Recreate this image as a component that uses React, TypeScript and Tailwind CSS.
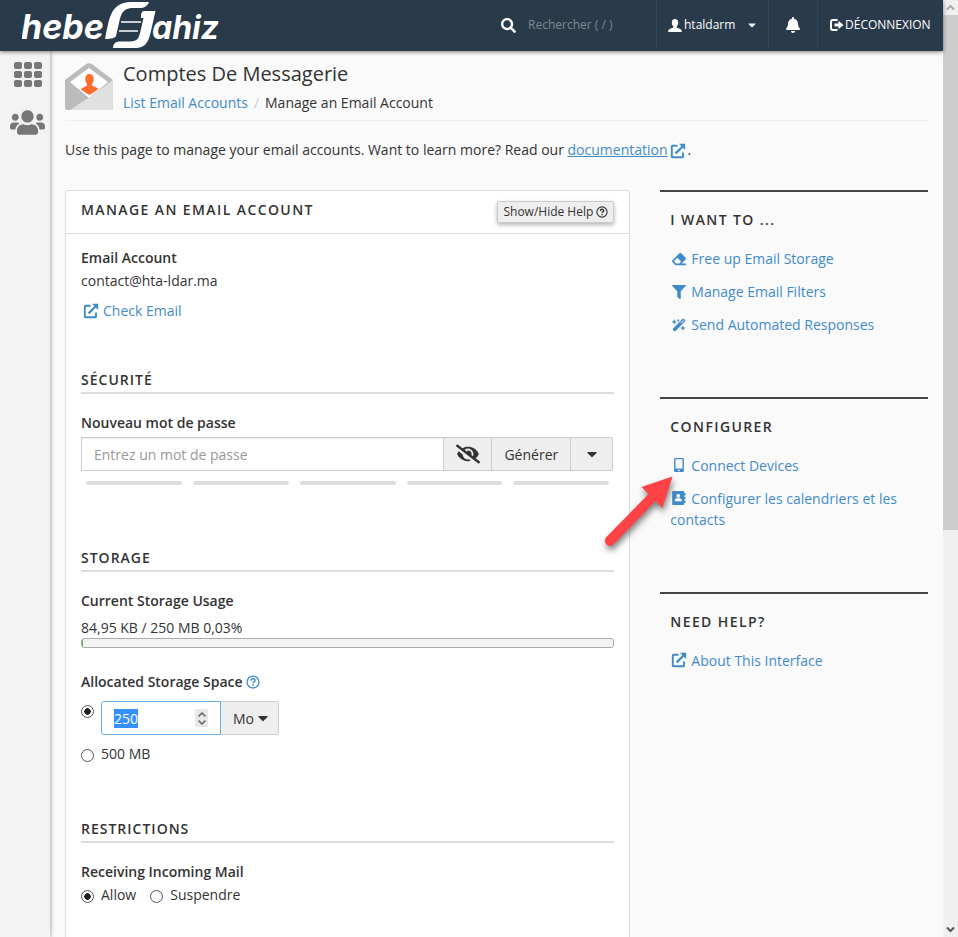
import { useEffect, useRef, type ReactNode } from "react";
import { FaBell, FaCaretDown, FaEraser, FaEyeSlash, FaFilter, FaSearch, FaUsers } from "react-icons/fa";
import { FaWandMagicSparkles } from "react-icons/fa6";

function ExternalIcon({ className = "" }: { className?: string }) {
  return (
    <svg viewBox="0 0 16 16" className={`inline-block h-4 w-4 shrink-0 ${className}`} fill="none" stroke="currentColor" strokeWidth="1.9" aria-hidden="true">
      <path d="M7.5 2.8H2.5a.7.7 0 0 0-.7.7v10a.7.7 0 0 0 .7.7h9.800a.7.7 0 0 0 .7-.7V9.500" />
      <path d="M5.600 10.400 12.800 3.200" strokeWidth="2.200" />
      <path d="M9 .8h6.200v6.200z" fill="currentColor" stroke="none" />
    </svg>
  );
}

function HelpIcon({ className = "" }: { className?: string }) {
  return (
    <svg viewBox="0 0 16 16" className={`inline-block shrink-0 ${className}`} fill="none" stroke="currentColor" strokeWidth="1.5" aria-hidden="true">
      <circle cx="8" cy="8" r="6.8" />
      <path d="M5.9 6.5c0-3 4.3-2.8 4.3-.3 0 1.6-2.1 1.6-2.1 3.1" strokeWidth="1.8" />
      <path d="M7.2 10.6h1.8v1.7H7.2z" fill="currentColor" stroke="none" />
    </svg>
  );
}

function PhoneIcon() {
  return (
    <svg viewBox="0 0 16 16" className="inline-block h-4 w-4" aria-hidden="true">
      <path fill="currentColor" fillRule="evenodd" d="M4.5 1h7c.8 0 1.4.6 1.4 1.3v11.4c0 .7-.6 1.3-1.4 1.3h-7c-.8 0-1.4-.6-1.4-1.3V2.300C3.100 1.600 3.700 1 4.500 1zm0 1.300v9.200h7V2.300zM8 12.400a.9.9 0 1 0 0 1.800.9.9 0 0 0 0-1.800z" />
    </svg>
  );
}

function ContactIcon() {
  return (
    <svg viewBox="0 0 16 16" className="inline-block h-4 w-4" aria-hidden="true">
      <path fill="currentColor" d="M2.200 1h10c.6 0 1 .4 1 1v12c0 .6-.4 1-1 1h-10c-.6 0-1-.4-1-1V2c0-.6.4-1 1-1zM13.200 3h1.300v2.500h-1.300zM13.200 6.800h1.300v2.500h-1.300zM13.200 10.500h1.300V13h-1.300z" />
      <circle cx="7.300" cy="5.900" r="1.900" fill="#fafafa" />
      <path d="M3.800 11.300c0-3 1.800-3 3.500-3s3.500 0 3.500 3z" fill="#fafafa" />
    </svg>
  );
}

function UserIcon() {
  return (
    <svg viewBox="0 0 14 13" className="h-[13px] w-[14px]" fill="currentColor" aria-hidden="true">
      <path d="M7 0c2 0 3.200 1.300 3.200 3.500 0 1.700-.6 3-1.500 3.800v1.100l4.100 1.900c.7.400 1 1.400 1 2.700H.2c0-1.300.3-2.300 1-2.700l4.100-1.900V7.300C4.400 6.500 3.800 5.200 3.800 3.500 3.800 1.300 5 0 7 0z" />
    </svg>
  );
}

function LogoutIcon() {
  return (
    <svg viewBox="0 0 14 12" className="h-3 w-[14px]" aria-hidden="true">
      <path d="M7.500 1H3Q1 1 1 3v6q0 2 2 2h4.500" fill="none" stroke="currentColor" strokeWidth="2" />
      <path d="M4.500 4.500H8.500V1.800L13.500 6 8.500 10.200V7.500H4.500z" fill="currentColor" />
    </svg>
  );
}

function Logo() {
  return (
    <svg viewBox="0 0 200 50" className="h-[50px] w-[200px]" role="img" aria-label="hebeR Jahiz">
      <g fill="#fff" fontFamily="Inter, 'Open Sans', sans-serif" fontStyle="italic" fontWeight="700">
        <text x="-1" y="39" fontSize="34">hebe</text>
        <text x="130" y="39" fontSize="32">ahiz</text>
      </g>
      <path fill="#fff" d="M83 39C87 22 87 2 109 2H127C125.500 6 122 8 118 8H112C99 8 99 16 97 23L94 36C93 38 90 39 83 39z" />
      <path fill="#fff" d="M121.500 11H133.500L128.500 33C125.500 46 120.500 48 111.500 48H91Q91 42 97 41.500H108C115.500 41.500 117 38 118.500 31L121.500 18H119Q118.500 12 121.500 11z" />
      <path d="M99 22H119M97 31H116" stroke="#fff" strokeWidth="1.500" />
    </svg>
  );
}

function EnvelopeIcon() {
  return (
    <svg viewBox="0 0 48 48" className="h-12 w-12 shrink-0" aria-hidden="true">
      <path d="M0 17 20.500 1.500Q24 -1 27.500 1.500L48 17V45q0 2-2 2H2q-2 0-2-2z" fill="#bbb" />
      <path d="M24 5 43 19 24 35 5 19z" fill="#fff" />
      <path d="M48 17V45q0 2-2 2H5L24 34.500z" fill="#e0e0e0" />
      <path d="M24.500 11c3 0 4.200 2 4.200 5 0 2-.8 4-1.700 5v1.500l5.800 2.800c.4.200.4.900 0 1.300L25.500 31.500q-1 .7-2 0L16.500 27c-.4-.5-.4-1.300 0-1.500l5.500-3V21c-.9-1-1.700-3-1.700-5 0-3 1.200-5 4.200-5z" fill="#ff6c2c" />
    </svg>
  );
}

function Arrow() {
  return (
    <svg viewBox="0 0 90 90" className="pointer-events-none absolute left-[596px] top-[468px] h-[90px] w-[90px] drop-shadow-[1px_4px_3px_rgba(0,0,0,0.5)]" aria-hidden="true">
      <path d="M76.500 8.500 66.500 40 59.500 33 17.500 76.500A5 5 0 0 1 10.500 69L52.500 26 45.500 19z" fill="#ff4245" />
    </svg>
  );
}

const radio =
  "h-[13px] w-[13px] shrink-0 appearance-none rounded-full border border-[#555] bg-white checked:bg-[radial-gradient(circle,#222_0_3px,#fff_3.500px)]";

function SectionTitle({ children, className }: { children: ReactNode; className: string }) {
  return <h3 className={`border-b-2 border-[#ddd] pb-0.5 font-semibold uppercase tracking-[1px] ${className}`}>{children}</h3>;
}

function SideSection({ title, children }: { title: string; children: ReactNode }) {
  return (
    <section className="border-t-2 border-[#444] px-[10px] pt-[17px]">
      <h3 className="font-semibold uppercase tracking-widest">{title}</h3>
      <ul className="mt-[18px] flex flex-col gap-3">{children}</ul>
    </section>
  );
}

function SideLink({ icon, children }: { icon: ReactNode; children: ReactNode }) {
  return (
    <li>
      <a href="#" className="text-[#428bca]">
        <span className="ml-px mr-1 inline-flex h-4 w-4 items-center justify-center align-[-2px]">{icon}</span>
        {children}
      </a>
    </li>
  );
}

function Header() {
  return (
    <header className="relative z-20 flex h-[51px] shrink-0 items-stretch bg-[#293a4a] pb-px text-xs text-white shadow-[0_1px_4px_rgba(0,0,0,0.5)]">
      <a href="#" className="ml-[22px]"><Logo /></a>
      <label className="ml-auto flex items-center">
        <FaSearch className="h-[15px] w-[15px]" aria-label="Rechercher" />
        <input type="search" placeholder="Rechercher ( / )" className="ml-3 w-[128px] bg-transparent outline-none placeholder:text-[#7f8890]" />
      </label>
      <button className="flex w-28 items-center border-l border-[#33475a] pl-[11px]">
        <UserIcon />
        <span className="ml-0.5">htaldarm</span>
        <FaCaretDown className="ml-3 h-3 w-[10px]" />
      </button>
      <button aria-label="Notifications" className="flex w-[49px] items-center justify-center border-l border-[#33475a]">
        <FaBell className="h-4 w-4" />
      </button>
      <a href="#" className="flex w-[126px] items-center border-l border-[#33475a] pl-3">
        <LogoutIcon />
        <span className="ml-px">DÉCONNEXION</span>
      </a>
    </header>
  );
}

export default function App() {
  const quota = useRef<HTMLInputElement>(null);
  useEffect(() => {
    quota.current?.focus({ preventScroll: true });
    quota.current?.select();
  }, []);

  return (
    <div className="relative flex h-screen overflow-hidden bg-[#fafafa] font-['Open_Sans','Noto_Sans',sans-serif] text-sm leading-[21px] text-[#333]">
      <div className="flex min-w-0 flex-1 flex-col">
        <Header />
        <div className="flex min-h-0 flex-1">
          <nav className="relative z-10 flex w-[50px] shrink-0 flex-col items-center bg-[#f3f3f3] pt-[11px] text-[#777] shadow-[1px_0_4px_rgba(0,0,0,0.3)]">
            <a href="#" aria-label="Tools" className="ml-[5px] grid grid-cols-3 gap-[2px]">
              {Array.from({ length: 9 }, (_, i) => (
                <span key={i} className="h-[7px] w-2 rounded-[2px] bg-[#777]" />
              ))}
            </a>
            <a href="#" aria-label="User manager" className="ml-[5px] mt-[18px]">
              <FaUsers className="h-[35px] w-[35px]" />
            </a>
          </nav>

          <main className="min-w-0 flex-1 overflow-hidden px-[15px]">
            <div className="flex gap-[10px] border-b border-[#eee] pb-[7px] pt-3">
              <EnvelopeIcon />
              <div>
                <h1 className="text-xl leading-[22px]">Comptes De Messagerie</h1>
                <nav aria-label="Breadcrumb" className="mt-[7px]">
                  <a href="#" className="text-[#428bca]">List Email Accounts</a>
                  <span className="px-[6px] text-[#ccc]">/</span>
                  <span>Manage an Email Account</span>
                </nav>
              </div>
            </div>
            <p className="mt-[18px]">
              Use this page to manage your email accounts. Want to learn more? Read our{" "}
              <a href="#" className="text-[#428bca]">
                <span className="underline">documentation</span>
                <ExternalIcon className="ml-0.5 align-[-4px]" />
              </a>
              <span className="ml-0.5">.</span>
            </p>

            <div className="-mx-[15px] mt-[30px] flex items-start">
              <div className="w-2/3 px-[15px]">
                <section className="rounded-t-[3px] border border-[#ddd] bg-white">
                  <div className="flex h-[43px] items-start justify-between border-b border-[#ddd] px-[15px]">
                    <h2 className="mt-2 font-semibold uppercase tracking-widest">Manage an Email Account</h2>
                    <button className="mt-[10px] flex h-[22px] items-center gap-[3px] rounded-[2px] border border-[#ccc] bg-[#eee] px-[5px] text-xs shadow-[0_2px_4px_rgba(0,0,0,0.3)]">
                      Show/Hide Help
                      <HelpIcon className="h-3 w-3" />
                    </button>
                  </div>
                  <div className="px-[15px] pb-20 pt-[13px]">
                    <div className="font-semibold">Email Account</div>
                    <div className="mt-0.5">contact@hta-ldar.ma</div>
                    <a href="#" className="mt-[9px] flex items-center gap-1 pl-0.5 text-[#428bca]">
                      <ExternalIcon /> Check Email
                    </a>

                    <SectionTitle className="mt-12">Sécurité</SectionTitle>
                    <label htmlFor="password" className="mt-[18px] block font-semibold">Nouveau mot de passe</label>
                    <div className="mr-px mt-1 flex h-[34px]">
                      <input id="password" type="password" placeholder="Entrez un mot de passe" className="min-w-0 flex-1 border border-[#ccc] bg-white px-3 shadow-[inset_0_1px_1px_rgba(0,0,0,0.075)] outline-none placeholder:text-[#999]" />
                      <button aria-label="Show password" className="flex w-[47px] items-center justify-center border-y border-[#ccc] bg-[#eee]">
                        <FaEyeSlash className="h-6 w-6" />
                      </button>
                      <button className="w-20 border border-[#ccc] bg-[#eee]">Générer</button>
                      <button aria-label="Password options" className="flex w-[42px] items-center justify-center rounded-r-[2px] border-y border-r border-[#ccc] bg-[#eee]">
                        <FaCaretDown className="h-4 w-3" />
                      </button>
                    </div>
                    <div className="mt-[10px] grid grid-cols-5 gap-[11px] px-[5px]">
                      {[1, 2, 3, 4, 5].map((n) => (
                        <span key={n} className="h-1 rounded-full bg-[#ddd]" />
                      ))}
                    </div>

                    <SectionTitle className="mt-[62px]">Storage</SectionTitle>
                    <div className="mt-[18px] font-semibold">Current Storage Usage</div>
                    <div className="mt-[7px] leading-5">84,95 KB / 250 MB 0,03%</div>
                    <div className="h-[10px] overflow-hidden rounded-[3px] border border-[#aaa] bg-[#f3f3f3]">
                      <div className="h-full w-px bg-[#5cb85c]" />
                    </div>

                    <div className="mt-[23px] flex items-center gap-[3px] font-semibold">
                      <label htmlFor="quota">Allocated Storage Space</label>
                      <button aria-label="Storage help" className="flex text-[#428bca]"><HelpIcon className="h-[14px] w-[14px]" /></button>
                    </div>
                    <div className="mt-[9px] flex">
                      <input type="radio" name="space" defaultChecked aria-label="Custom size" className={`${radio} mr-[7px] mt-1`} />
                      <div className="relative h-[34px] w-[120px]">
                        <input id="quota" ref={quota} type="text" inputMode="numeric" defaultValue="250" className="h-full w-full rounded-l-[3px] border border-[#66afe9] bg-white px-3 outline-none selection:bg-[#3390ff] selection:text-white" />
                        <div className="absolute right-[13px] top-2 flex h-[18px] w-[13px] flex-col items-center justify-between bg-[#e8e8e8] py-px">
                          <button aria-label="Increase" className="flex h-2 w-full items-center justify-center">
                            <svg viewBox="0 0 8 5" className="h-[5px] w-2" fill="none" stroke="#666" strokeWidth="1.500"><path d="M.6 4.400 4 1l3.400 3.400" /></svg>
                          </button>
                          <button aria-label="Decrease" className="flex h-2 w-full items-center justify-center">
                            <svg viewBox="0 0 8 5" className="h-[5px] w-2" fill="none" stroke="#666" strokeWidth="1.500"><path d="M.6.6 4 4 7.400.6" /></svg>
                          </button>
                        </div>
                      </div>
                      <button className="flex h-[34px] w-[58px] items-center gap-[3px] rounded-r-[2px] border border-l-0 border-[#ccc] bg-[#eee] pl-3">
                        Mo <FaCaretDown className="h-4 w-3" />
                      </button>
                    </div>
                    <label className="mt-2 flex items-center gap-[7px]">
                      <input type="radio" name="space" className={`${radio} mt-[3px]`} /> 500 MB
                    </label>

                    <SectionTitle className="mt-[54px]">Restrictions</SectionTitle>
                    <fieldset className="pt-[18px]">
                      <legend className="float-left w-full font-semibold">Receiving Incoming Mail</legend>
                      <div className="clear-both flex gap-[14px] pt-0.5">
                        <label className="flex items-center gap-[7px]">
                          <input type="radio" name="incoming" defaultChecked className={`${radio} mt-[3px]`} /> Allow
                        </label>
                        <label className="flex items-center gap-[7px]">
                          <input type="radio" name="incoming" className={`${radio} mt-[3px]`} /> Suspendre
                        </label>
                      </div>
                    </fieldset>
                  </div>
                </section>
              </div>

              <aside className="flex w-1/3 flex-col gap-[62px] px-[15px]">
                <SideSection title="I want to ...">
                  <SideLink icon={<FaEraser className="h-[14px] w-[14px]" />}>Free up Email Storage</SideLink>
                  <SideLink icon={<FaFilter className="h-[14px] w-[14px]" />}>Manage Email Filters</SideLink>
                  <SideLink icon={<FaWandMagicSparkles className="h-[14px] w-[14px]" />}>Send Automated Responses</SideLink>
                </SideSection>
                <SideSection title="Configurer">
                  <SideLink icon={<PhoneIcon />}>Connect Devices</SideLink>
                  <SideLink icon={<ContactIcon />}>Configurer les calendriers et les contacts</SideLink>
                </SideSection>
                <SideSection title="Need help?">
                  <SideLink icon={<ExternalIcon />}>About This Interface</SideLink>
                </SideSection>
              </aside>
            </div>
          </main>
        </div>
      </div>

      <div className="flex w-[15px] shrink-0 flex-col bg-[#f0f0f0]" aria-hidden="true">
        <svg viewBox="0 0 15 15" className="h-[15px] w-[15px] shrink-0" fill="none" stroke="#aaa" strokeWidth="2"><path d="M4 9.500 7.500 6 11 9.500" /></svg>
        <div className="h-[55%] bg-[#cdcdcd]" />
        <svg viewBox="0 0 15 15" className="mt-auto h-[15px] w-[15px]" fill="none" stroke="#555" strokeWidth="2"><path d="M4 5.500 7.500 9 11 5.500" /></svg>
      </div>
      <Arrow />
    </div>
  );
}
